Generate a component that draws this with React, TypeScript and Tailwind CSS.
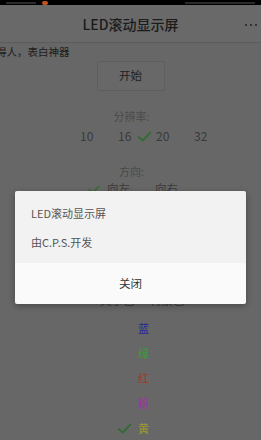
import React from "react";

const Check = ({ className = "" }: { className?: string }) => (
  <svg viewBox="0 0 16 12" className={className} fill="none">
    <path d="M1.5 6.5 L6 10.5 L14.5 1.5" stroke="#2f6b2f" strokeWidth="1.8" strokeLinecap="round" strokeLinejoin="round" />
  </svg>
);

export default function App() {
  const font = { fontFamily: '"Noto Sans CJK SC", "Noto Sans", sans-serif' };
  const res = [
    { v: "10", on: false },
    { v: "16", on: false },
    { v: "20", on: true },
    { v: "32", on: false },
  ];
  const colors = [
    { t: "蓝", c: "text-[#26269a]", on: false },
    { t: "绿", c: "text-[#35a035]", on: false },
    { t: "红", c: "text-[#a8361f]", on: false },
    { t: "粉", c: "text-[#a42fa4]", on: false },
    { t: "黄", c: "text-[#9c9c2c]", on: true },
  ];
  return (
    <div className="relative w-[261px] h-[440px] overflow-hidden bg-[#676767]" style={font}>
      {/* status bar */}
      <div className="h-[5px] bg-black flex items-center px-[6px] gap-[3px]">
        <div className="w-[30px] h-[2px] bg-[#2a2a2a]" />
        <div className="w-[6px] h-[4px] rounded-full bg-[#c2521f] ml-[3px]" />
        <div className="flex-1" />
        <div className="w-[70px] h-[2px] bg-[#2a2a2a]" />
      </div>
      {/* app bar */}
      <div className="relative h-[38px] flex items-center justify-center border-b border-[#5c5c5c] bg-[#696969]">
        <span className="text-[14px] leading-none text-[#1b1b1b] font-medium">LED滚动显示屏</span>
        <div className="absolute right-[4px] top-[19px] flex gap-[3px]">
          <div className="w-[2px] h-[2px] rounded-full bg-[#222]" />
          <div className="w-[2px] h-[2px] rounded-full bg-[#222]" />
          <div className="w-[2px] h-[2px] rounded-full bg-[#222]" />
        </div>
      </div>
      {/* marquee */}
      <div className="h-[18px] flex items-center overflow-hidden">
        <span className="whitespace-nowrap text-[10.5px] leading-none text-[#1c1c1c] ml-[-4px]">得人，表白神器</span>
      </div>
      {/* button */}
      <div className="flex justify-center">
        <div className="w-[68px] h-[30px] flex items-center justify-center border border-[#5e5e5e] bg-[#686868] rounded-[2px]">
          <span className="text-[11.5px] leading-none text-[#1e1e1e]">开始</span>
        </div>
      </div>
      {/* resolution */}
      <div className="mt-[16px] h-[18px] flex items-center justify-center">
        <span className="text-[11px] leading-none text-[#4a4a4a] ml-[2px]">分辨率:</span>
      </div>
      <div className="mt-[2px] h-[18px] flex items-center pl-[60px]">
        {res.map((r) => (
          <div key={r.v} className="w-[38px] flex items-center">
            <div className="w-[20px] flex items-center justify-start pl-[1px]">
              {r.on && <Check className="w-[15px] h-[11px]" />}
            </div>
            <span className="text-[12px] leading-none text-[#3a3a3a]">{r.v}</span>
          </div>
        ))}
      </div>
      {/* direction */}
      <div className="mt-[17px] h-[18px] flex items-center justify-center">
        <span className="text-[11px] leading-none text-[#4a4a4a] ml-[2px]">方向:</span>
      </div>
      <div className="h-[18px] flex items-center pl-[88px]">
        <div className="w-[49px] flex items-center">
          <div className="w-[19px]">
            <Check className="w-[12px] h-[9px]" />
          </div>
          <span className="text-[11.5px] leading-none text-[#3a3a3a]">向左</span>
        </div>
        <div className="flex items-center">
          <div className="w-[18px]" />
          <span className="text-[11.5px] leading-none text-[#3a3a3a]">向右</span>
        </div>
      </div>
      {/* hidden section under dialog */}
      <div className="mt-[20px] h-[18px] flex items-center justify-center">
        <span className="text-[11px] leading-none text-[#4a4a4a]">速度:</span>
      </div>
      <div className="h-[18px]" />
      <div className="mt-[20px] h-[18px] flex items-center justify-center">
        <span className="text-[11px] leading-none text-[#4a4a4a]">颜色:</span>
      </div>
      <div className="mt-[0px] h-[18px] flex items-center pl-[88px]">
        <div className="w-[62px] flex items-center">
          <div className="w-[12px]" />
          <span className="text-[11.5px] leading-none text-[#3a3a3a]">文字色</span>
        </div>
        <span className="text-[11.5px] leading-none text-[#3a3a3a]">背景色</span>
      </div>
      {/* colors */}
      <div className="mt-[9px] flex flex-col gap-[7px]">
        {colors.map((c) => (
          <div key={c.t} className="h-[18px] flex items-center pl-[117px]">
            <div className="w-[21px] flex items-center">
              {c.on && <Check className="w-[15px] h-[11px]" />}
            </div>
            <span className={`text-[11px] leading-none ${c.c}`}>{c.t}</span>
          </div>
        ))}
      </div>

      {/* dialog */}
      <div className="absolute left-[15px] top-[191px] w-[231px] rounded-[2px] overflow-hidden shadow-[0_2px_6px_rgba(0,0,0,0.3)]">
        <div className="h-[72px] bg-[#f2f2f2] pl-[16px] flex flex-col">
          <div className="mt-[14px] h-[16px] flex items-center">
            <span className="text-[11px] leading-none text-[#555]">LED滚动显示屏</span>
          </div>
          <div className="mt-[13px] h-[16px] flex items-center">
            <span className="text-[11px] leading-none text-[#555]">由C.P.S.开发</span>
          </div>
        </div>
        <div className="h-[41px] bg-[#fafafa] flex items-center justify-center">
          <span className="text-[11.5px] leading-none text-[#333]">关闭</span>
        </div>
      </div>
    </div>
  );
}
